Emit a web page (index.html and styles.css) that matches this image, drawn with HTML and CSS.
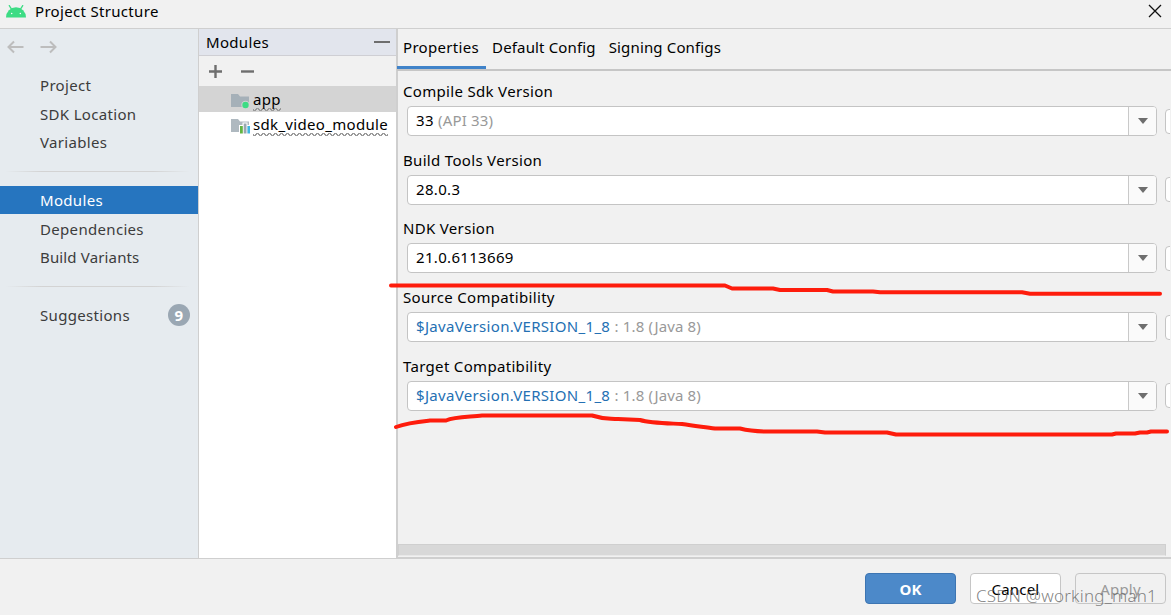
FILE: index.html
```html
<!DOCTYPE html>
<html lang="en">
<head>
    <meta charset="UTF-8">
    <meta name="viewport" content="width=device-width, initial-scale=1.0">
    <title>Project Structure</title>
    <link rel="stylesheet" href="styles.css">
</head>
<body>
    <div class="titlebar">
        <svg class="logo" width="20" height="13" viewBox="0 0 20 13">
            <path d="M0 12.500a10 10.300 0 0 1 20 0z" fill="#3ddc84"/>
            <path d="M3.300.6l2.500 4M16.700.6l-2.500 4" stroke="#3ddc84" stroke-width="1.300" stroke-linecap="round"/>
            <circle cx="5.700" cy="8.500" r=".75" fill="#fff"/>
            <circle cx="14.300" cy="8.500" r=".75" fill="#fff"/>
        </svg>
        <h1 class="title">Project Structure</h1>
        <svg class="close" width="14" height="14" viewBox="0 0 14 14">
            <path d="M1 1l12 12M13 1L1 13" stroke="#111" stroke-width="1.300"/>
        </svg>
    </div>

    <div class="main">
        <div class="sidebar">
            <div class="history">
                <svg width="17" height="14" viewBox="0 0 17 14"><path d="M16.500 7H1.500M7 1.500L1.500 7 7 12.500"/></svg>
                <svg width="17" height="14" viewBox="0 0 17 14"><path d="M.5 7h15M10 1.500L15.500 7 10 12.500"/></svg>
            </div>
            <ul class="nav">
                <li>Project</li>
                <li>SDK Location</li>
                <li>Variables</li>
            </ul>
            <div class="separator"></div>
            <ul class="nav">
                <li class="active">Modules</li>
                <li>Dependencies</li>
                <li class="tight">Build Variants</li>
            </ul>
            <div class="separator"></div>
            <ul class="nav">
                <li class="suggestions">Suggestions <span class="badge">9</span></li>
            </ul>
        </div>

        <div class="modules">
            <div class="modules-header">
                <span>Modules</span>
                <i class="dash"></i>
            </div>
            <div class="modules-toolbar">
                <svg width="13" height="13" viewBox="0 0 13 13"><path d="M6.500 0v13M0 6.500h13"/></svg>
                <svg width="13" height="13" viewBox="0 0 13 13"><path d="M0 6.500h13"/></svg>
            </div>
            <div class="module selected">
                <svg width="19" height="16" viewBox="0 0 19 16">
                    <path d="M0 1h7l2 2.500h9V14H0z" fill="#a5b0b8"/>
                    <circle cx="14.500" cy="12" r="4.200" fill="#d4d4d4"/>
                    <circle cx="14.500" cy="12" r="3.200" fill="#3ddc84"/>
                </svg>
                <span class="typo">app</span>
            </div>
            <div class="module">
                <svg width="19" height="16" viewBox="0 0 19 16">
                    <path d="M0 1h7l2 2.500h9V14H0z" fill="#afb9c0"/>
                    <path d="M8 7h3.500V4.500h5V7H19v9H8z" fill="#fff"/>
                    <path d="M9 8h2.800v7.500H9z" fill="#62b543"/>
                    <path d="M12.700 5.500h2.800v10h-2.800z" fill="#9aa7b0"/>
                    <path d="M16.400 8H19v7.500h-2.600z" fill="#40b6e0"/>
                </svg>
                <span class="typo">sdk_video_module</span>
            </div>
        </div>

        <div class="content">
            <div class="tabs">
                <span class="tab current">Properties</span>
                <span class="tab tight">Default Config</span>
                <span class="tab tight">Signing Configs</span>
            </div>
            <div class="form">
                <div class="field">
                    <label>Compile Sdk Version</label>
                    <div class="row">
                        <div class="combo"><span class="value">33 <em>(API 33)</em></span><span class="arrow"></span></div>
                        <div class="more"></div>
                    </div>
                </div>
                <div class="field">
                    <label>Build Tools Version</label>
                    <div class="row">
                        <div class="combo"><span class="value">28.0.3</span><span class="arrow"></span></div>
                        <div class="more"></div>
                    </div>
                </div>
                <div class="field">
                    <label>NDK Version</label>
                    <div class="row">
                        <div class="combo"><span class="value">21.0.6113669</span><span class="arrow"></span></div>
                        <div class="more"></div>
                    </div>
                </div>
                <div class="field">
                    <label>Source Compatibility</label>
                    <div class="row">
                        <div class="combo"><span class="value"><b>$JavaVersion.VERSION_1_8</b> <em>: 1.8 (Java 8)</em></span><span class="arrow"></span></div>
                        <div class="more"></div>
                    </div>
                </div>
                <div class="field">
                    <label>Target Compatibility</label>
                    <div class="row">
                        <div class="combo"><span class="value"><b>$JavaVersion.VERSION_1_8</b> <em>: 1.8 (Java 8)</em></span><span class="arrow"></span></div>
                        <div class="more"></div>
                    </div>
                </div>
            </div>
            <div class="scrollbar"></div>
        </div>
    </div>

    <div class="footer">
        <button class="btn primary">OK</button>
        <button class="btn">Cancel</button>
        <button class="btn disabled">Apply</button>
    </div>

    <!-- hand drawn marks -->
    <svg class="marks" width="1171" height="615" viewBox="0 0 1171 615">
        <path d="M391 285.500H725L732 288.500H773L780 290H827L833 291.500H873L880 292.300H1022L1030 293.700H1160"/>
        <path d="M396 427C408 422.500 420 421.500 430 420.500H446C455 416.500 470 417 482 415.500H592C603 419 608 418.500 615 419H618L640 420C650 423 660 423 682 424C695 426 705 427 715 428.500H740C750 431 760 431.500 768 431.500H817L825 432.500H887L896 434.500H1112L1116 433.500H1135L1140 432.500H1147L1151 431.500H1167"/>
    </svg>
    <div class="watermark">CSDN @working_man1</div>
</body>
</html>
```
FILE: styles.css
```css
* {
    box-sizing: border-box;
}

body {
    margin: 0;
    width: 1171px;
    height: 615px;
    display: flex;
    flex-direction: column;
    position: relative;
    overflow: hidden;
    background: #f1f1f1;
    color: #000;
    font-family: "Noto Sans", "Open Sans", sans-serif;
    font-size: 15px;
    line-height: 20px;
    letter-spacing: 0.32px;
}

.tight {
    letter-spacing: 0.15px;
}

/* Title bar */
.titlebar {
    display: flex;
    align-items: flex-start;
    height: 29px;
    padding: 0 9px 0 6px;
    border-bottom: 1px solid #cfcfcf;
}

.logo {
    margin: 5px 9px 0 0;
}

.title {
    flex: 1;
    margin: 1px 0 0;
    font-size: 15px;
    font-weight: normal;
}

.close {
    margin-top: 4px;
}

.main {
    display: flex;
    height: 529px;
}

/* Sidebar */
.sidebar {
    width: 199px;
    background: #e6ebef;
    border-right: 1px solid #cfcfcf;
    color: #3c3c3c;
}

.history {
    display: flex;
    gap: 16px;
    padding: 11px 0 0 7px;
    height: 43px;
}

.history svg {
    fill: none;
    stroke: #bdbdbd;
    stroke-width: 2;
}

.nav {
    list-style: none;
    margin: 0;
    padding: 0;
}

.nav li {
    height: 28.6px;
    padding: 3px 0 0 40px;
}

.nav .active {
    height: 28px;
    margin-bottom: 2px;
    padding-top: 4px;
    background: #2675bf;
    color: #fff;
}

.separator {
    height: 1px;
    margin: 13px 8px 14px 5px;
    background: linear-gradient(to right, transparent, #d3d3d3 20%, #d3d3d3 80%, transparent);
}

.nav .suggestions {
    display: flex;
    justify-content: space-between;
    padding-top: 4px;
    padding-right: 8px;
}

.badge {
    width: 22px;
    height: 22px;
    margin-top: -1px;
    border-radius: 50%;
    background: #9aa7b3;
    color: #fff;
    font-weight: bold;
    text-align: center;
    line-height: 22px;
}

/* Modules list */
.modules {
    width: 197px;
    background: #fff;
}

.modules-header {
    display: flex;
    justify-content: space-between;
    align-items: center;
    height: 27px;
    padding: 0 6px 0 7px;
    background: #e2e5ed;
    border-bottom: 1px solid #cfcfd4;
}

.dash {
    width: 16px;
    height: 2px;
    background: #6e6e6e;
}

.modules-toolbar {
    display: flex;
    align-items: center;
    gap: 19px;
    height: 30px;
    padding-left: 10px;
    background: #f1f1f1;
}

.modules-toolbar svg {
    stroke: #6e6e6e;
    stroke-width: 2.4;
}

.module {
    display: flex;
    height: 26px;
    padding: 3px 0 0 32px;
    gap: 3px;
}

.module svg {
    margin-top: 4px;
}

.module.selected {
    background: #d4d4d4;
}

.module:not(.selected) {
    padding-top: 2px;
}

/* small zigzag under unknown words */
.typo {
    height: 22px;
    background: 
        linear-gradient(135deg, transparent 42%, #9a9a9a 42%, #9a9a9a 62%, transparent 62%) 0 100% / 6px 3px repeat-x,
        linear-gradient(45deg, transparent 42%, #9a9a9a 42%, #9a9a9a 62%, transparent 62%) 3px 100% / 6px 3px repeat-x;
}

/* Properties panel */
.content {
    flex: 1;
    display: flex;
    flex-direction: column;
    min-width: 0;
    border-left: 2px solid #cfcfcf;
}

.tabs {
    display: flex;
    gap: 13px;
    height: 42px;
    margin-left: -1px;
    padding-left: 6px;
    border-bottom: 2px solid #c6c6c6;
}

.tab {
    height: 40px;
    padding-top: 8px;
}

.tab.current {
    margin-left: -6px;
    margin-right: -7px;
    padding: 8px 7px 0 6px;
    border-bottom: 3px solid #4083c9;
}

.form {
    flex: 1;
    margin-right: 1px;
    padding: 10px 0 0 5px;
    overflow: hidden;
}

.field {
    height: 68.7px;
}

.field label {
    display: block;
    height: 25px;
}

.row {
    display: flex;
    align-items: center;
    margin-left: 4px;
}

.combo {
    display: flex;
    width: 750px;
    height: 30px;
    flex-shrink: 0;
    background: #fff;
    border: 1px solid #c4c4c4;
    border-radius: 4px;
    overflow: hidden;
}

.value {
    flex: 1;
    padding: 3px 8px 0;
}

.value em {
    font-style: normal;
    color: #999;
    letter-spacing: 0.15px;
}

.value b {
    font-weight: normal;
    color: #2470b3;
}

.arrow {
    display: flex;
    align-items: center;
    justify-content: center;
    width: 28px;
    background: #fafafa;
    border-left: 1px solid #c9c9c9;
}

.arrow::before {
    content: "";
    border: 5.5px solid transparent;
    border-top: 6px solid #6e6e6e;
    border-bottom: 0;
}

.more {
    width: 12px;
    height: 25px;
    margin-left: 8px;
    flex-shrink: 0;
    background: #fff;
    border: 1px solid #c4c4c4;
    border-radius: 4px;
}

.scrollbar {
    height: 12px;
    margin: 0 5px 1px 0;
    background: #d8d8d8;
    border: 1px solid #cfcfcf;
    border-bottom-color: #e8e8e8;
}

.content::after {
    content: "";
    height: 1px;
    background: #cfcfcf;
}

/* Buttons */
.footer {
    display: flex;
    justify-content: flex-end;
    gap: 14px;
    flex: 1;
    padding: 14px 5px 0 0;
    border-top: 1px solid #cfcfcf;
}

.btn {
    width: 91px;
    height: 31px;
    padding: 1px 0 0;
    background: #fff;
    border: 1px solid #c6c6c6;
    border-radius: 4px;
    color: #000;
    font: inherit;
    letter-spacing: 0.2px;
}

.btn.primary {
    background: #4c89c9;
    border-color: #3d75b2;
    color: #fff;
    font-weight: bold;
}

.btn.disabled {
    background: #f1f1f1;
    color: #999;
}

.marks {
    position: absolute;
    top: 0;
    left: 0;
    fill: none;
    stroke: #fe1c0c;
    stroke-width: 4;
    stroke-linecap: round;
    stroke-linejoin: round;
    pointer-events: none;
}

.watermark {
    position: absolute;
    right: 14px;
    bottom: 8px;
    color: rgba(100, 100, 100, 0.8);
    font-size: 17px;
    font-weight: 300;
    line-height: 22px;
    letter-spacing: 0.22px;
}
```
